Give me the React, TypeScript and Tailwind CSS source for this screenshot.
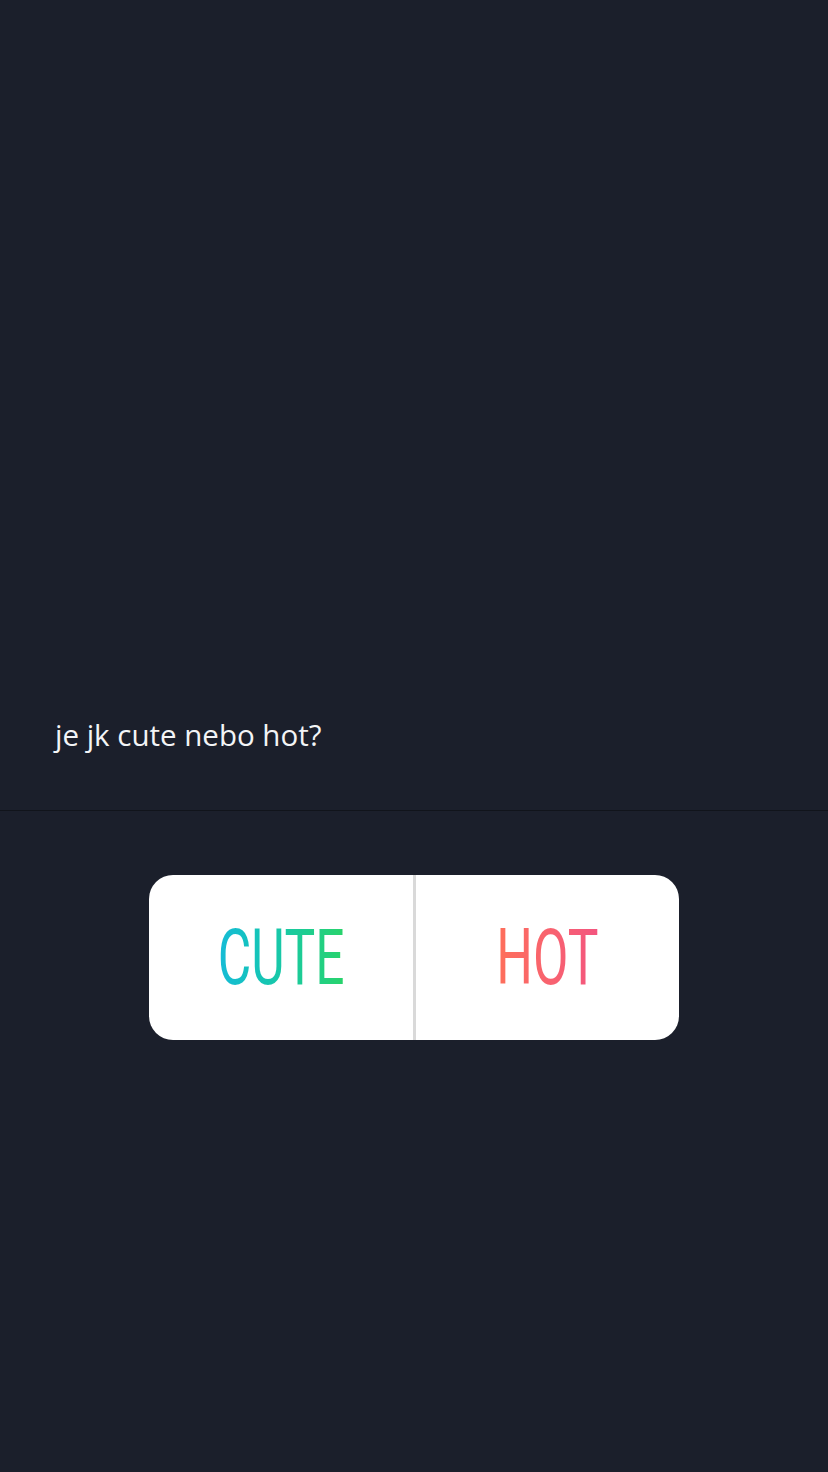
import React from 'react'

const App = () => {
  return (
    <div className="min-h-[1472px] w-full bg-[#1b1f2b]">
      <div className="flex h-[811px] flex-col justify-end border-b border-[#11141b] px-[55px] pb-[61px]">
        <p className="text-[29.5px] leading-none text-[#f3f4f6] font-['Open_Sans',sans-serif]">je jk cute nebo hot?</p>
      </div>

      <div className="flex justify-center pt-[64px]">
        <div className="flex h-[165px] w-[530px] overflow-hidden rounded-[24px] bg-white">
          <div className="flex flex-1 items-center justify-center">
            <span className="inline-block scale-x-[0.66] bg-linear-to-r from-[#17bbd7] to-[#29d36a] bg-clip-text text-[78px] font-normal leading-none text-transparent font-['Roboto',sans-serif]">
              CUTE
            </span>
          </div>
          <div className="w-[3px] bg-[#d9d9d9]" />
          <div className="flex flex-1 items-center justify-center">
            <span className="inline-block scale-x-[0.66] bg-linear-to-r from-[#fe6f5a] to-[#f3557f] bg-clip-text text-[78px] font-normal leading-none text-transparent font-['Roboto',sans-serif]">
              HOT
            </span>
          </div>
        </div>
      </div>
    </div>
  )
}

export default App
